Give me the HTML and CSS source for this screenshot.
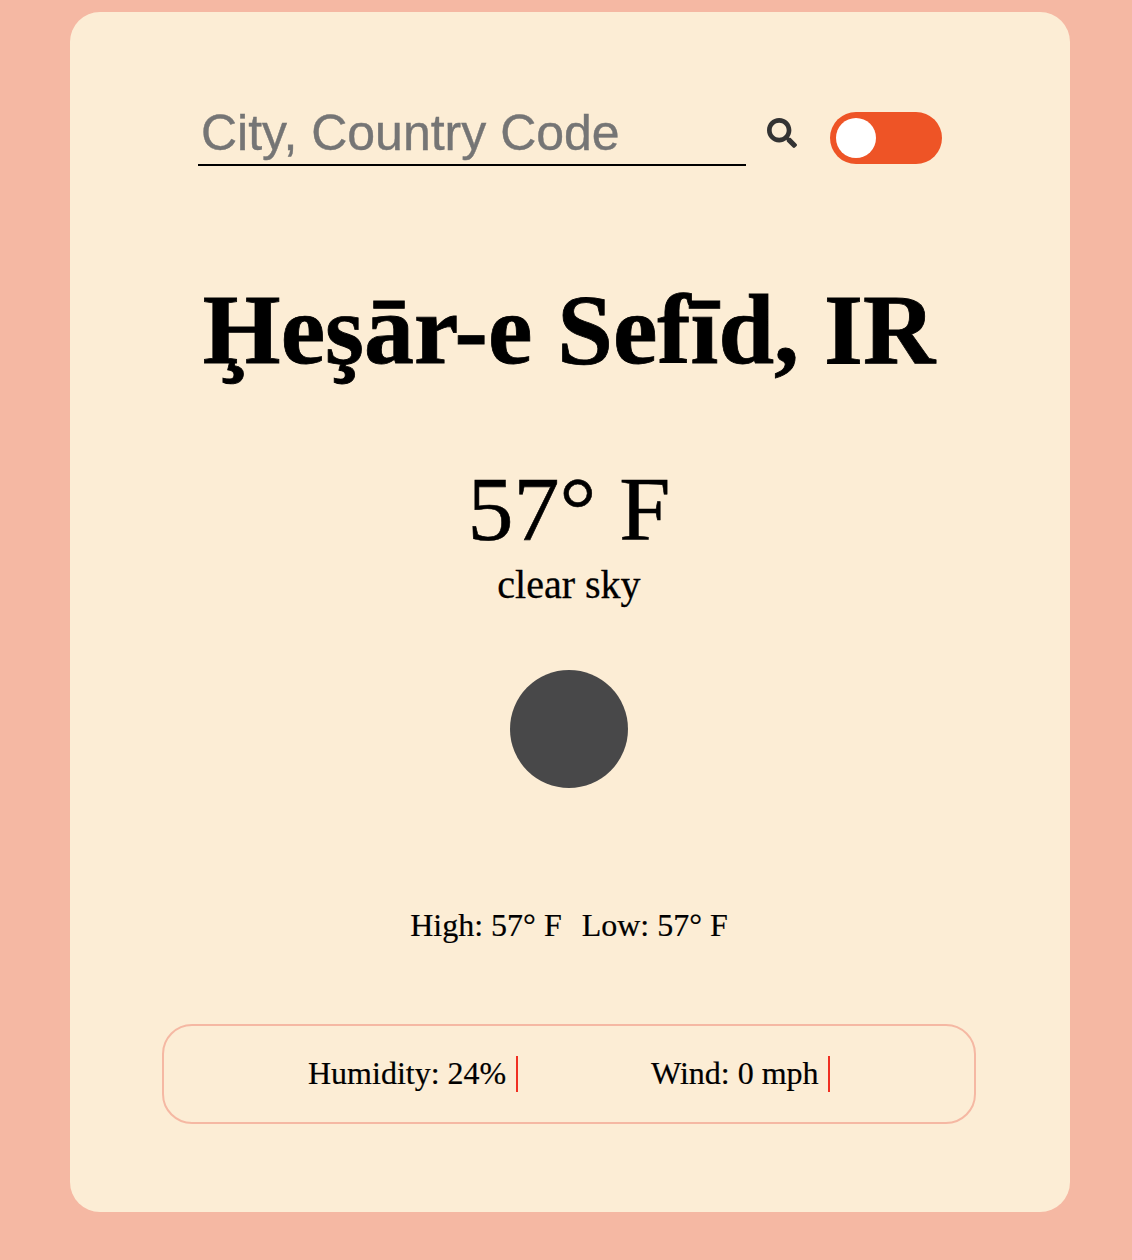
FILE: index.html
```html
<!DOCTYPE html>
<html lang="en">
<head>
<meta charset="utf-8">
<title>Weather</title>
<link rel="stylesheet" href="styles.css">
</head>
<body>
<main class="card">
  <form class="search">
    <input class="search-input" type="text" placeholder="City, Country Code" aria-label="City, Country Code">
    <button class="search-button" type="button" aria-label="Search">
      <svg viewBox="0 0 512 512" width="30" height="30"><path fill="#333" d="M505 442.700 405.300 343c-4.500-4.500-10.600-7-17-7H372c27.600-35.300 44-79.700 44-128C416 93.100 322.900 0 208 0S0 93.100 0 208s93.100 208 208 208c48.300 0 92.700-16.400 128-44v16.300c0 6.400 2.500 12.500 7 17l99.700 99.700c9.400 9.400 24.600 9.400 33.900 0l28.300-28.300c9.400-9.400 9.400-24.600.1-34zM208 336c-70.700 0-128-57.200-128-128 0-70.700 57.200-128 128-128 70.700 0 128 57.200 128 128 0 70.700-57.200 128-128 128z"/></svg>
    </button>
    <span class="toggle"><span class="knob"></span></span>
  </form>
  <h1 class="city">Ḩeşār-e Sefīd, IR</h1>
  <div class="temperature">57° F</div>
  <div class="condition">clear sky</div>
  <div class="sky-icon"></div>
  <div class="range"><span>High: 57° F</span><span>Low: 57° F</span></div>
  <section class="details">
    <div class="detail humidity">Humidity: 24%</div>
    <div class="detail wind">Wind: 0 mph</div>
  </section>
</main>
</body>
</html>
```

FILE: styles.css
```css
* { box-sizing: border-box; }
body {
  margin: 0;
  padding: 12px 62px 48px 70px;
  background: #f5b8a3;
  color: #000;
  font-family: "Liberation Serif", serif;
}
.card {
  display: flex;
  flex-direction: column;
  align-items: center;
  height: 1200px;
  padding: 100px 94px 0 92px;
  background: #fcedd5;
  border-radius: 30px;
}
.search { display: flex; width: 744px; height: 54px; margin-left: 2px; }
.search-input {
  width: 548px;
  height: 54px;
  padding: 0 4px 10px 3px;
  border: 0;
  border-bottom: 2px solid #000;
  background: transparent;
  font: 50px "Liberation Sans", sans-serif;
}
.search-input::placeholder {
  color: #757575;
  opacity: 1;
  -webkit-text-stroke: 0.4px #757575;
}
.search-button {
  width: 30px;
  height: 30px;
  margin: 6px 33px 0 21px;
  padding: 0;
  border: 0;
  background: none;
}
.search-button svg { display: block; }
.toggle {
  width: 112px;
  height: 52px;
  padding: 6px;
  border-radius: 26px;
  background: #ee5426;
}
.knob { display: block; width: 40px; height: 40px; border-radius: 50%; background: #fff; }
.city {
  margin: 104px 0 0;
  font-size: 100px;
  line-height: 120px;
  white-space: nowrap;
  -webkit-text-stroke: 0.8px #000;
}
.temperature { margin-top: 67px; font-size: 92px; line-height: 104px; -webkit-text-stroke: 0.6px #000; }
.condition { margin-top: 2px; font-size: 40px; line-height: 44px; -webkit-text-stroke: 0.3px #000; }
.sky-icon { width: 118px; height: 118px; margin-top: 63px; border-radius: 50%; background: #484849; }
.range { display: flex; gap: 20px; margin-top: 119px; font-size: 32px; line-height: 36px; -webkit-text-stroke: 0.2px #000; }
.details {
  display: flex;
  width: 814px;
  height: 100px;
  margin-top: 81px;
  padding: 30px 144px;
  justify-content: space-between;
  border: 2px solid #f5b8a3;
  border-radius: 30px;
}
.detail { height: 36px; border-right: 2px solid #f03022; font-size: 32px; line-height: 34px; -webkit-text-stroke: 0.2px #000; }
.humidity { width: 210px; }
.wind { width: 179px; }
```
